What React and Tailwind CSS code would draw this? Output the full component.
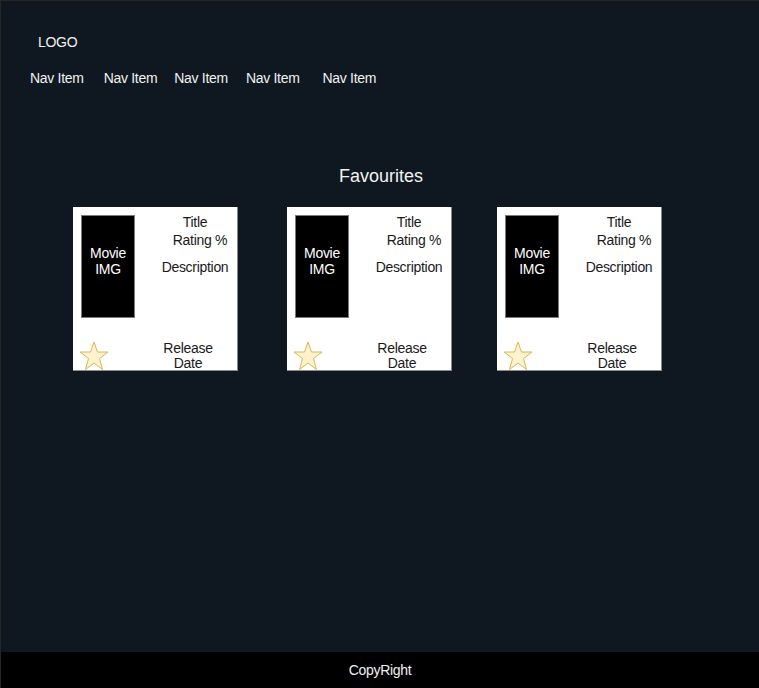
import React from 'react';

// Stjärna för favorit-markering
function Star() {
  return (
    <svg width="30" height="30" viewBox="0 0 30 30">
      <polygon
        points="15,1 18.5,11 29,11 20.5,17.5 23.5,28.5 15,22 6.5,28.5 9.5,17.5 1,11 11.5,11"
        fill="#fff2cc"
        stroke="#d6b656"
        strokeWidth="1"
      />
    </svg>
  );
}

function MovieCard() {
  return (
    <div className="w-[165px] h-[164px] bg-white border-r border-b border-[#8a8a8a] overflow-hidden flex flex-col text-[#1a1a1a] text-[14px] tracking-[-0.3px]">
      <div className="h-[134px] shrink-0 flex items-start">
        <div className="ml-[8px] mt-[8px] w-[54px] h-[103px] bg-black border border-[#7a7a7a] flex items-center justify-center text-center text-white leading-[16px] pb-[12px]">
          Movie<br />IMG
        </div>
        <div className="flex-1 pl-[18px] pt-[7px] text-center leading-[17.5px]">
          <div>Title</div>
          <div className="pl-[10px]">Rating %</div>
          <div className="mt-[10px]">Description</div>
        </div>
      </div>
      <div className="flex items-start shrink-0">
        <div className="ml-[6px] shrink-0">
          <Star />
        </div>
        <div className="flex-1 pl-[30px] text-center leading-[15px]">
          Release<br />Date
        </div>
      </div>
    </div>
  );
}

export default function App() {
  const navItems = [
    { label: 'Nav Item', cls: 'ml-[29px]' },
    { label: 'Nav Item', cls: 'ml-[20px]' },
    { label: 'Nav Item', cls: 'ml-[17px]' },
    { label: 'Nav Item', cls: 'ml-[18px]' },
    { label: 'Nav Item', cls: 'ml-[23px]' },
  ];

  return (
    <div className="h-[688px] w-full flex flex-col bg-[#0f1820] border-t border-l border-[#262626] font-['Liberation_Sans',Arial,sans-serif] text-[#f2f2f2]">
      {/* Header */}
      <div className="pl-[37px] pt-[32px] text-[14px] tracking-[-0.3px] leading-[18px]">LOGO</div>
      <div className="flex mt-[18px] text-[14px] tracking-[-0.3px] leading-[18px]">
        {navItems.map((n, i) => (
          <span key={i} className={n.cls}>{n.label}</span>
        ))}
      </div>

      {/* Innehåll */}
      <div className="flex-1">
        <h2 className="mt-[78px] text-center text-[18px] leading-[22px] pl-[2px]">Favourites</h2>
        <div className="flex mt-[20px]">
          <div className="ml-[72px]"><MovieCard /></div>
          <div className="ml-[49px]"><MovieCard /></div>
          <div className="ml-[45px]"><MovieCard /></div>
        </div>
      </div>

      {/* Sidfot */}
      <div className="h-[36px] bg-black flex items-center justify-center text-[14px] tracking-[-0.3px]">
        CopyRight
      </div>
    </div>
  );
}
